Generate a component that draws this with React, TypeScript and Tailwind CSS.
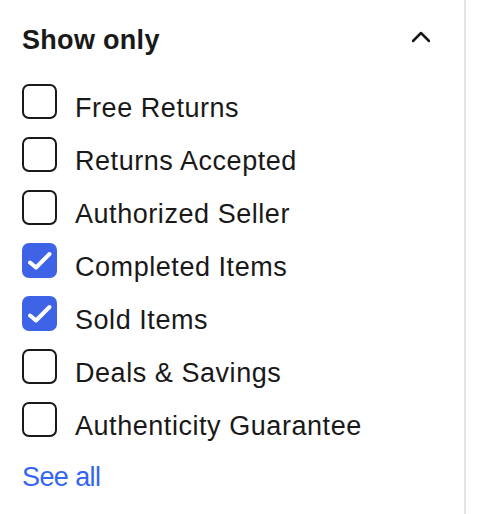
import React from "react";

const items: { label: string; checked: boolean }[] = [
  { label: "Free Returns", checked: false },
  { label: "Returns Accepted", checked: false },
  { label: "Authorized Seller", checked: false },
  { label: "Completed Items", checked: true },
  { label: "Sold Items", checked: true },
  { label: "Deals & Savings", checked: false },
  { label: "Authenticity Guarantee", checked: false },
];

function Box({ checked }: { checked: boolean }) {
  if (checked) {
    return (
      <div className="mt-[9px] flex h-[35px] w-[35px] shrink-0 items-center justify-center rounded-[7px] bg-[#3f63e6]">
        <svg width="35" height="35" viewBox="0 0 35 35" fill="none">
          <path d="M8 19.5 L14 24.5 L27.5 11" stroke="#ffffff" strokeWidth="4" strokeLinecap="round" strokeLinejoin="round" />
        </svg>
      </div>
    );
  }
  return <div className="mt-[9px] h-[35px] w-[35px] shrink-0 rounded-[7px] border-[2.5px] border-[#191919] bg-white" />;
}

export default function App() {
  return (
    <div className="flex h-[514px] w-[484px] bg-white font-['Liberation_Sans',Arial,sans-serif] text-[#191919]">
      <div className="w-[464px] pl-[22px] pr-[34px] pt-[24px]">
        <div className="flex h-[32px] items-center justify-between">
          <h2 className="text-[27px] font-bold leading-[32px] tracking-[0.3px]">Show only</h2>
          <svg width="18" height="12" viewBox="0 0 18 12" fill="none" className="mt-[-6px]">
            <path d="M1 10 L9 2 L17 10" stroke="#191919" strokeWidth="2.5" strokeLinecap="round" strokeLinejoin="round" />
          </svg>
        </div>
        <ul className="mt-[19px]">
          {items.map((it) => (
            <li key={it.label} className="flex h-[53px] items-start">
              <Box checked={it.checked} />
              <span className="ml-[18px] mt-[17px] text-[27px] leading-[32px] tracking-[0.55px]">{it.label}</span>
            </li>
          ))}
        </ul>
        <a className="mt-[15px] block text-[27px] leading-[32px] tracking-[-0.6px] text-[#3665f3]">See all</a>
      </div>
      <div className="h-full w-[2px] bg-[#e5e5e5]" />
    </div>
  );
}
